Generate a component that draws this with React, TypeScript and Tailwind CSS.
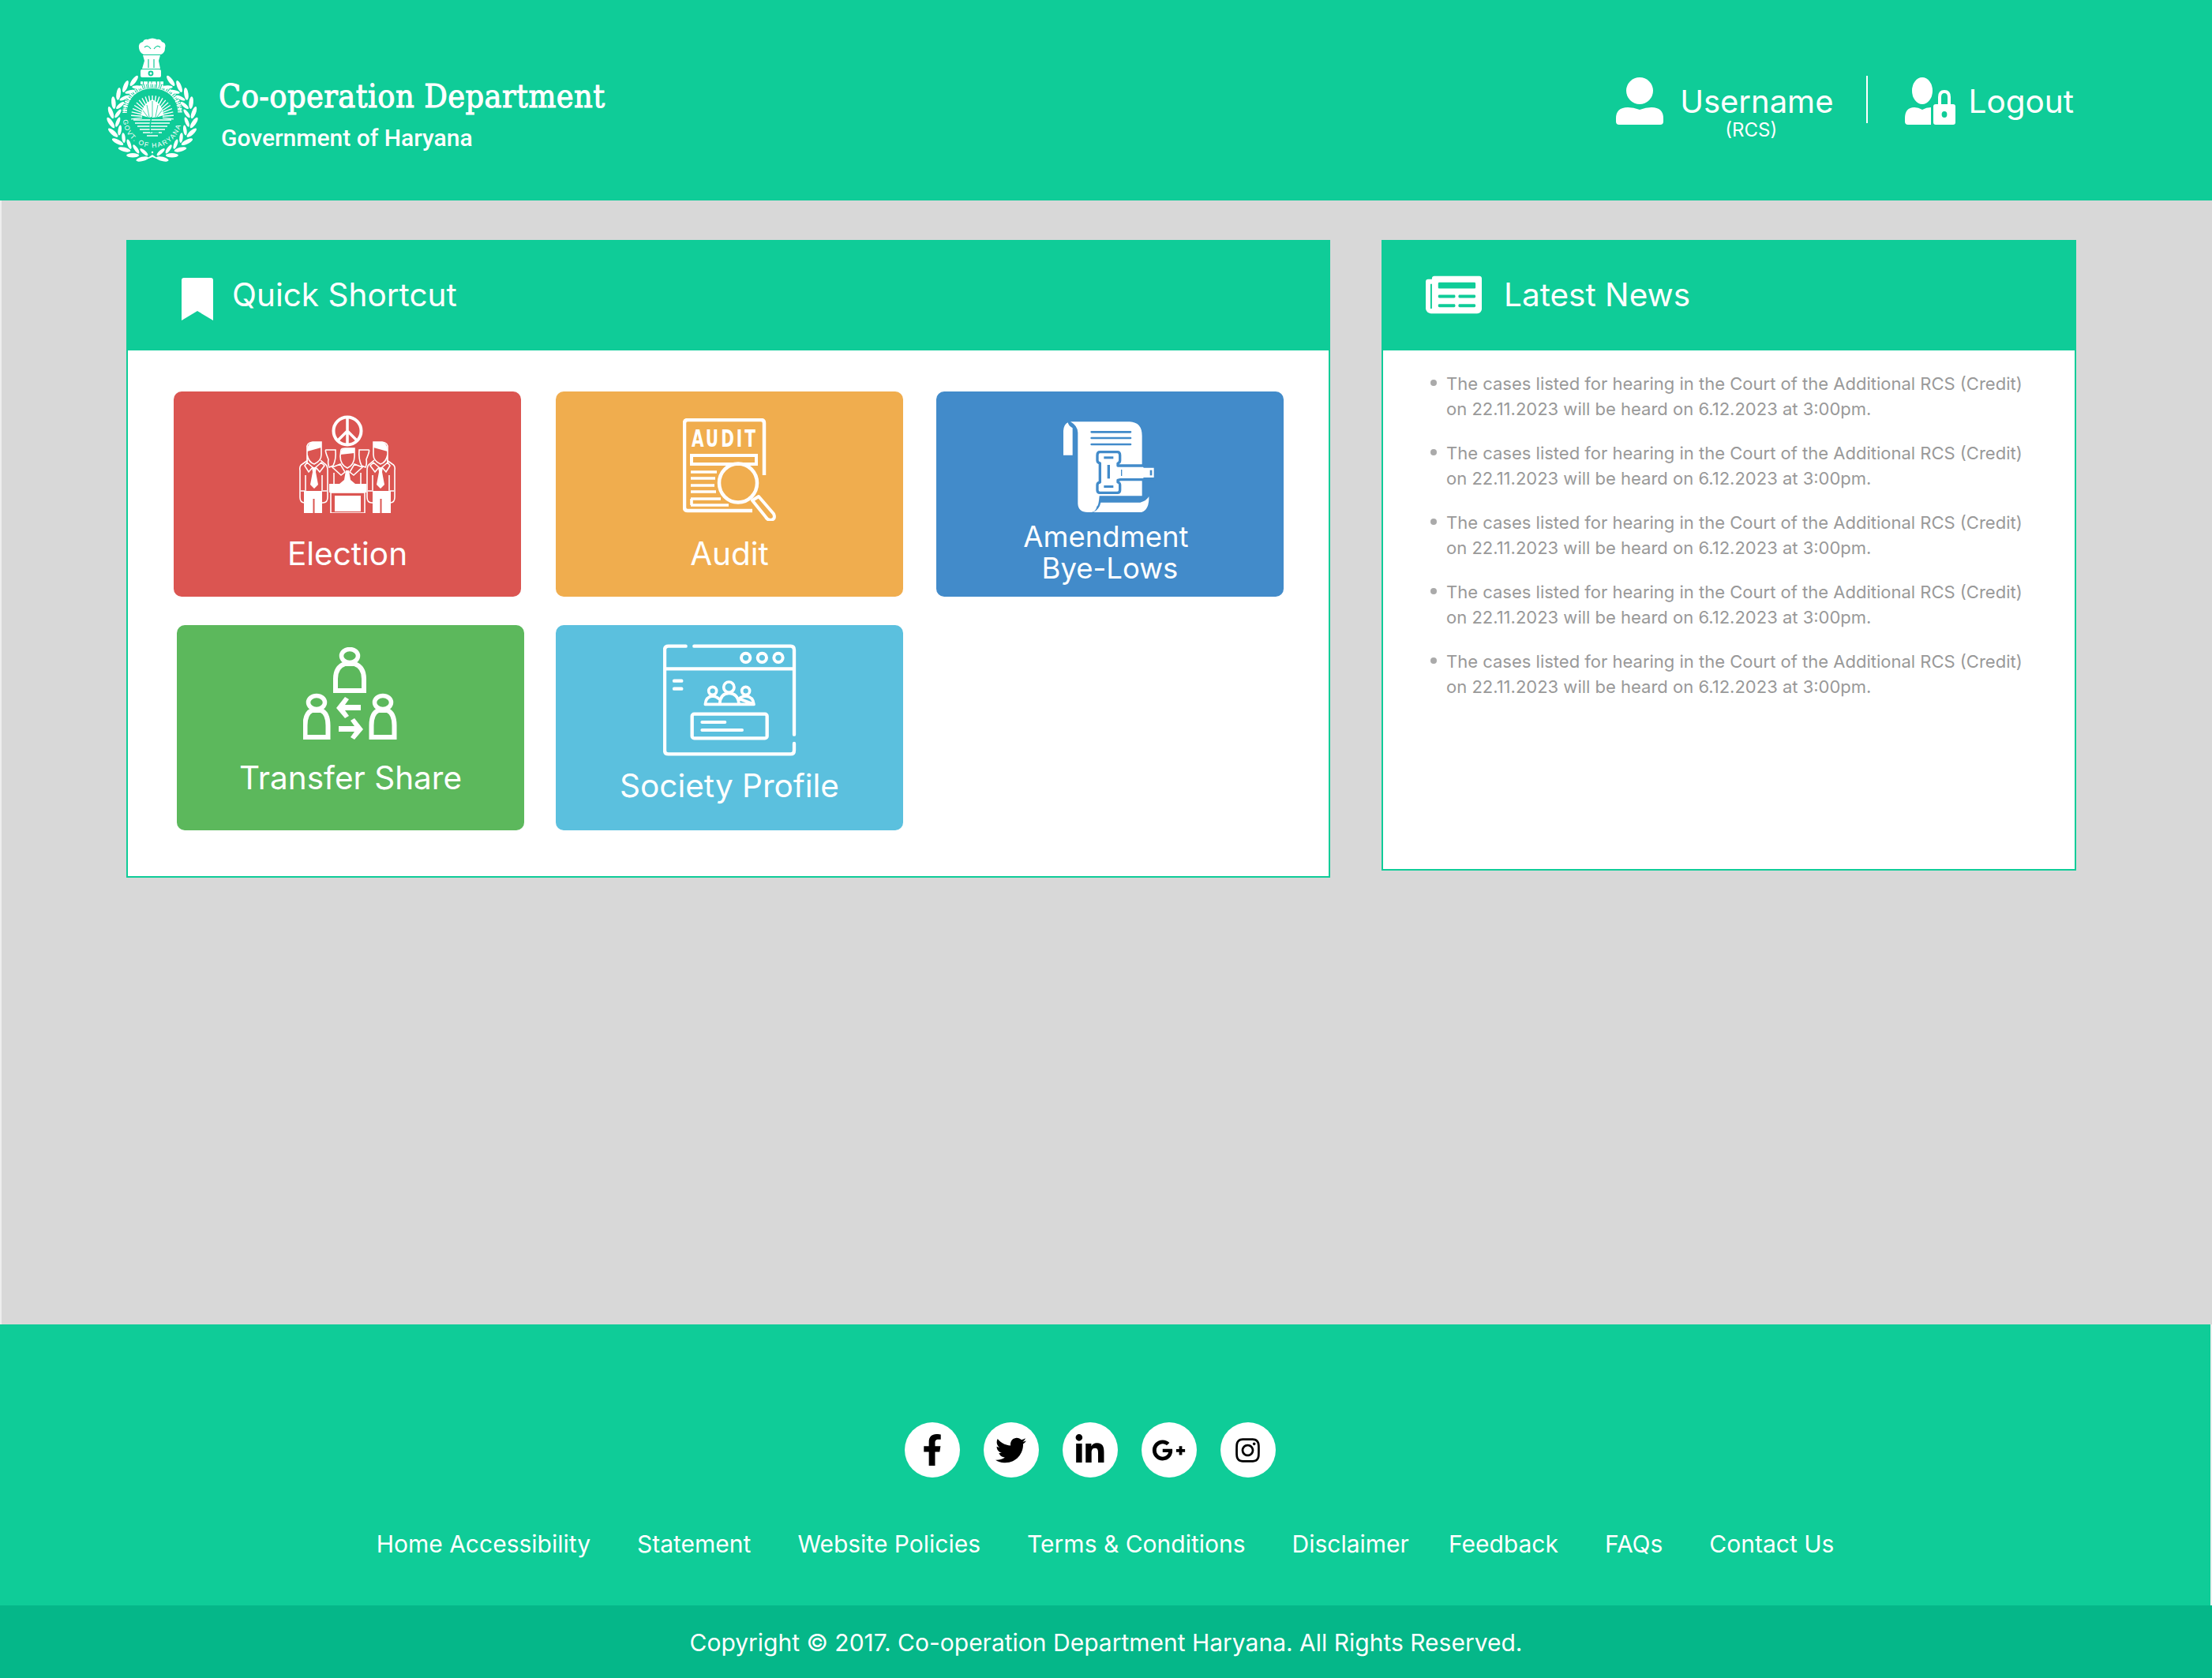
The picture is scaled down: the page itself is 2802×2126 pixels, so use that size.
import React from "react";
import { FaFacebookF, FaTwitter, FaLinkedinIn, FaGooglePlusG, FaInstagram, FaNewspaper } from "react-icons/fa";

const wreathAngles = [26, 40, 54, 68, 82, 96, 110, 124, 138, 152, 166];

function Wreath() {
  const cx = 60;
  const cy = 102;
  return (
    <g>
      {wreathAngles.map((deg) => {
        const a = (deg * Math.PI) / 180;
        const x1 = cx + 53 * Math.sin(a);
        const y1 = cy - 53 * Math.cos(a);
        const x2 = cx + 44 * Math.sin(a);
        const y2 = cy - 44 * Math.cos(a);
        const rot = deg - 90;
        return (
          <g key={deg}>
            <ellipse cx={x1} cy={y1} rx="2.7" ry="8" transform={`rotate(${rot + 28} ${x1} ${y1})`} />
            <ellipse cx={x2} cy={y2} rx="2.2" ry="6.5" transform={`rotate(${rot - 28} ${x2} ${y2})`} />
          </g>
        );
      })}
    </g>
  );
}

function Emblem() {
  const cx = 60;
  return (
    <svg width="119" height="155" viewBox="0 0 119 155" fill="white" className="shrink-0 overflow-visible">
      <path d="M43 13 Q42 6 48 5 Q50 1 54 2 Q60 -1 66 2 Q70 1 72 5 Q78 6 76 13 Q76 19 71 21 L49 21 Q44 19 43 13Z" />
      <path d="M48 22 H70 L68 29 L70 39 H47 L50 29Z" />
      <path d="M55 27 V38 M62 27 V38 M50 12 Q54 8 58 14 M70 12 Q66 8 62 14" stroke="#0fcc98" strokeWidth="1.2" fill="none" />
      <rect x="45" y="40" width="26" height="10" rx="2" />
      <circle cx="58" cy="45" r="3.4" fill="#0fcc98" />
      <circle cx="58" cy="45" r="1.5" />
      <path d="M45 57 H74" stroke="white" strokeWidth="3.5" strokeDasharray="3 1 5 1.500" fill="none" />
      <path d="M24 94 A36.500 36.500 0 0 1 96 94" fill="none" stroke="white" strokeWidth="0.9" />
      <path d="M25 95 A33.500 33.500 0 0 1 95 95" fill="none" stroke="white" strokeWidth="5.500" strokeDasharray="1.300 1 2 0.800 1 1.200 2.400 1" />
      <path id="govtArc" d="M23 102 A37 37 0 0 0 97 102" fill="none" />
      <text fontFamily="Liberation Sans, sans-serif" fontSize="8.5" fill="white" letterSpacing="1.5">
        <textPath href="#govtArc" startOffset="2">GOVT. OF HARYANA</textPath>
      </text>
      {Array.from({ length: 21 }, (_, i) => {
        const a = (Math.PI * 1.12 * (i + 0.5)) / 21 - Math.PI * 0.06;
        return (
          <line key={i} x1={cx - 13 * Math.cos(a)} y1={100 - 13 * Math.sin(a)} x2={cx - 27 * Math.cos(a)} y2={100 - 27 * Math.sin(a)} stroke="white" strokeWidth="1.400" />
        );
      })}
      <path d="M46 98 Q47 84 60 78 Q73 84 74 98 Q60 104 46 98Z" />
      <path d="M60 80 V100 M53 85 L56 100 M67 85 L64 100 M48 92 L54 100 M72 92 L66 100" stroke="#0fcc98" strokeWidth="0.8" />
      <path d="M36 104 H84 M38 108 H82 M41 112 H79 M44 116 H76 M48 120 H72 M53 124 H67" stroke="white" strokeWidth="1.700" />
      <path d="M59 100 Q56 112 58 120 M60 120 H68" stroke="#0fcc98" strokeWidth="1.500" fill="none" />
      <Wreath />
      <g transform="translate(120 0) scale(-1 1)"><Wreath /></g>
      <circle cx="60" cy="145" r="1.2" />
      <path d="M50 155 L60 148 L70 155 L60 151Z" />
    </svg>
  );
}

function UserIcon() {
  return (
    <svg width="60" height="60" viewBox="0 0 60 60" fill="white" className="shrink-0">
      <ellipse cx="30" cy="17" rx="17" ry="17" />
      <path d="M0 56 V52 Q0 38 15 38 Q22 38 30 41 Q38 38 45 38 Q60 38 60 52 V56 Q60 60 56 60 H4 Q0 60 0 56Z" />
    </svg>
  );
}

function UserLockIcon() {
  return (
    <svg width="64" height="60" viewBox="0 0 64 60" fill="white" className="shrink-0">
      <ellipse cx="22" cy="17" rx="13" ry="17" />
      <path d="M0 56 V52 Q0 38 12 38 Q17 38 22 41 Q27 38 33 38 L33 60 H4 Q0 60 0 56Z" />
      <path d="M36 37 Q36 34 39 34 H61 Q64 34 64 37 V57 Q64 60 61 60 H39 Q36 60 36 57Z" />
      <path d="M44 35 V25 Q44 18 50 18 Q56 18 56 25 V35" fill="none" stroke="white" strokeWidth="4" />
      <ellipse cx="50" cy="47" rx="3.4" ry="4" fill="#0fcc98" />
    </svg>
  );
}

function ElectionIcon() {
  const man = (
    <g>
      <path d="M10 62 V42 Q9 35 17 34 H28 V50 Q28 58 19 62 Q12 60 10 50Z" fill="none" stroke="white" strokeWidth="1.6" />
      <path d="M10 44 Q11 35 17 34 H28 V41 L10 46Z" />
      <path d="M11 57 L4 62 Q0 64 1 70 V104 Q1 111 7 111 H12 M27 57 L33 62 Q36 64 36 70 V104 Q36 111 30 111 H26" fill="none" stroke="white" strokeWidth="1.6" />
      <path d="M10 60 L17 66 L12 72 L7 64Z M28 60 L21 66 L26 72 L32 64Z" fill="none" stroke="white" strokeWidth="1.6" />
      <path d="M16 66 H22 L21 72 L24 88 L19 93 L14 88 L17 72Z" />
      <path d="M8 76 V95 M29 76 V95 M2 96 H9 M28 96 H35" fill="none" stroke="white" strokeWidth="1.6" />
      <path d="M6 96 H29 V124 H19.500 V106 H17.500 V124 H6Z" />
    </g>
  );
  return (
    <svg width="122" height="124" viewBox="0 0 122 124" fill="white" className="shrink-0">
      <circle cx="61" cy="20" r="17.500" fill="none" stroke="white" strokeWidth="4" />
      <path d="M61 3 V37 M61 20 L49 32 M61 20 L73 32" stroke="white" strokeWidth="3.5" fill="none" />
      {man}
      <g transform="translate(122 0) scale(-1 1)">{man}</g>
      <path d="M37 56 Q32 44 34 44 H46 Q47 56 43 64 L38 66 Q36 62 37 56Z M85 56 Q90 44 88 44 H76 Q75 56 79 64 L84 66 Q86 62 85 56Z" fill="none" stroke="white" strokeWidth="1.6" />
      <path d="M53 44 Q54 42 58 42 H70 V52 Q70 63 61 67 Q52 63 52 52Z" fill="none" stroke="white" strokeWidth="1.6" />
      <path d="M52 50 Q53 42 58 42 H70 V48Z" />
      <path d="M42 66 L52 62 L58 72 L53 76Z M80 66 L70 62 L64 72 L69 76Z" fill="none" stroke="white" strokeWidth="1.6" />
      <path d="M59 70 H63 L65 82 L71 87 H51 L57 82Z" />
      <path d="M44 73 V87 M78 73 V87" stroke="white" strokeWidth="1.6" />
      <rect x="38" y="87" width="47" height="11" />
      <rect x="40" y="98" width="43" height="26" fill="none" stroke="white" strokeWidth="1.600" />
      <rect x="45" y="102" width="33" height="20" />
    </svg>
  );
}

function AuditIcon() {
  return (
    <svg width="118" height="130" viewBox="0 0 118 130" fill="none" stroke="white" strokeWidth="4.5" className="shrink-0">
      <path d="M88 117 H6 Q2 117 2 113 V6 Q2 2 6 2 H99 Q103 2 103 6 V72" strokeLinejoin="round" />
      <text x="11" y="36" fill="white" stroke="none" fontFamily="DejaVu Sans Condensed, sans-serif" fontWeight="700" fontSize="30" letterSpacing="4" textLength="84" lengthAdjust="spacingAndGlyphs">AUDIT</text>
      <rect x="11" y="47" width="82" height="11" strokeWidth="4" />
      <path d="M10 68 H43 M10 76 H41 M10 85 H40 M10 93 H42 M10 102 H48 M10 110 H58 M11 102 V110" strokeWidth="3.600" />
      <ellipse cx="70" cy="82" rx="24" ry="24.500" strokeWidth="4.500" />
      <path d="M88 104 L96 99 L115 121 Q118 128 111 129 Q107 129 105 125Z" strokeWidth="4" strokeLinejoin="round" />
    </svg>
  );
}

function AmendmentIcon() {
  return (
    <svg width="140" height="135" viewBox="0 0 420 405" className="shrink-0">
      <path d="M33 62 Q35 38 50 31 Q53 44 68 52 L68 155 H33Z" fill="white" />
      <path d="M60 28 H285 Q332 30 332 82 V310 H170 Q167 350 160 350 Q158 368 140 372 H125 Q90 372 88 340 V70 Q88 44 60 28Z" fill="white" />
      <path d="M175 335 H325 Q350 328 358 312 Q360 362 330 372 H147 Q170 360 175 335Z" fill="white" />
      <path d="M140 67 H288 M140 90 H288 M140 114 H288" stroke="#428bca" strokeWidth="8" strokeLinecap="round" />
      <path d="M172 143 H238 Q248 143 248 155 V175 Q248 184 240 186 V195 H340 V198 H382 V245 H340 V248 H250 L240 250 V258 Q248 260 248 268 V288 Q248 298 238 298 H172 Q162 298 162 288 V268 Q162 260 172 258 V186 Q162 184 162 175 V155 Q162 143 172 143Z" fill="white" stroke="#428bca" strokeWidth="10" strokeLinejoin="round" />
      <rect x="187" y="160" width="36" height="9" fill="#428bca" />
      <rect x="187" y="270" width="36" height="9" fill="#428bca" />
      <rect x="200" y="192" width="10" height="52" fill="#428bca" />
      <rect x="252" y="210" width="4" height="24" fill="#428bca" />
      <rect x="362" y="212" width="8" height="20" fill="#428bca" />
    </svg>
  );
}

function TransferIcon() {
  const person = (x: number, y: number, w: number) => (
    <g>
      <ellipse cx={x} cy={y + 11} rx="10.500" ry="8.500" fill="none" stroke="white" strokeWidth="5.500" />
      <path d={`M${x - w / 2 + 3} ${y + 55} V${y + 40} Q${x - w / 2 + 3} ${y + 25} ${x - 6} ${y + 21} H${x + 6} Q${x + w / 2 - 3} ${y + 25} ${x + w / 2 - 3} ${y + 40} V${y + 55}Z`} fill="none" stroke="white" strokeWidth="6" />
    </g>
  );
  return (
    <svg width="120" height="118" viewBox="0 0 120 118" fill="white" className="shrink-0">
      {person(59, 0, 42)}
      {person(17, 59, 35)}
      {person(101, 59, 35)}
      <path d="M73 73 H53 L58 66 L53 63 L42 77 L53 90 L58 87 L53 80 H73Z" />
      <path d="M45 100 H65 L60 93 L65 90 L76 104 L65 117 L60 114 L65 107 H45Z" />
    </svg>
  );
}

function SocietyIcon() {
  return (
    <svg width="180" height="160" viewBox="0 0 540 480" fill="none" stroke="white" strokeWidth="13" strokeLinecap="round" strokeLinejoin="round" className="shrink-0">
      <path d="M86 26 H20 Q6 26 6 40 V422 Q6 436 20 436 H485 Q498 436 498 422 V396" />
      <path d="M118 26 H485 Q498 26 498 40 V362" />
      <path d="M8 112 H496" />
      <circle cx="314" cy="70" r="17" strokeWidth="12" />
      <circle cx="376" cy="70" r="17" strokeWidth="12" />
      <circle cx="438" cy="70" r="17" strokeWidth="12" />
      <path d="M42 158 H70 M42 188 H70" />
      <circle cx="188" cy="196" r="15" strokeWidth="11" />
      <circle cx="250" cy="182" r="20" strokeWidth="11" />
      <circle cx="314" cy="196" r="15" strokeWidth="11" />
      <path d="M160 247 Q162 218 188 216 Q200 216 212 226 M288 226 Q300 216 314 216 Q342 218 345 247 Z M160 247 H345 M215 245 Q218 205 250 205 Q284 205 288 245" strokeWidth="11" />
      <rect x="110" y="284" width="285" height="92" rx="8" />
      <path d="M148 315 H235 M148 345 H300" strokeWidth="12" />
    </svg>
  );
}

function Card({ color, className, icon, children }: { color: string; className: string; icon: React.ReactNode; children: React.ReactNode }) {
  return (
    <div className={`${color} ${className} h-[260px] rounded-[10px] flex flex-col items-center text-white text-center text-[40.5px] leading-[44px]`}>
      {icon}
      {children}
    </div>
  );
}

const newsItems = [0, 1, 2, 3, 4];
const links = [
  { t: "Home Accessibility", c: "" },
  { t: "Statement", c: "" },
  { t: "Website Policies", c: "" },
  { t: "Terms & Conditions", c: "" },
  { t: "Disclaimer", c: "mr-[-9px]" },
  { t: "Feedback", c: "" },
  { t: "FAQs", c: "" },
  { t: "Contact Us", c: "" },
];

export default function App() {
  return (
    <div className="w-[2802px] h-[2126px] flex flex-col bg-[#d8d8d8] font-['Inter',sans-serif] overflow-hidden">
      <header className="h-[254px] shrink-0 bg-[#0fcc98] flex justify-between pl-[133px] pr-[175px] text-white">
        <div className="flex items-start">
          <div className="mt-[48px]"><Emblem /></div>
          <div className="ml-[25px] mt-[102px]">
            <div className="font-['DejaVu_Serif_Condensed','DejaVu_Serif',serif] text-[41px] leading-[40px] tracking-[0.45px] [-webkit-text-stroke:1px_white]">Co-operation Department</div>
            <div className="font-['Roboto',sans-serif] font-medium text-[30px] leading-[32px] mt-[17px] ml-[3px]">Government of Haryana</div>
          </div>
        </div>
        <div className="flex items-start">
          <div className="mt-[98px] flex">
            <UserIcon />
            <div className="ml-[21px] mt-[7px] flex flex-col items-center">
              <div className="text-[40px] leading-[48px]">Username</div>
              <div className="text-[24px] leading-[28px] -mt-[2px] mr-[14px]">(RCS)</div>
            </div>
          </div>
          <div className="w-[2px] h-[60px] bg-white mt-[96px] ml-[42px] mr-[47px]"></div>
          <div className="mt-[98px] flex">
            <UserLockIcon />
            <div className="ml-[16px] mt-[7px] text-[40.5px] leading-[48px]">Logout</div>
          </div>
        </div>
      </header>

      <main className="flex-1 flex items-start pt-[50px] pl-[158px] border-l-2 border-[#eeeeee]">
        <section className="w-[1525px] h-[808px] border-2 border-t-0 border-[#0fcc98] bg-white">
          <div className="h-[140px] -mx-[2px] bg-[#0fcc98] flex items-center pl-[70px] text-white">
            <svg width="40" height="54" viewBox="0 0 40 54" fill="white" className="mt-[10px]">
              <path d="M3 0 H37 Q40 0 40 3 V54 L20 42 L0 54 V3 Q0 0 3 0Z" />
            </svg>
            <span className="ml-[24px] text-[40.5px] leading-[48px]">Quick Shortcut</span>
          </div>
          <div className="pt-[52px] pl-[58px]">
            <div className="flex">
              <Card color="bg-[#db5551]" className="w-[440px] pt-[30px]" icon={<ElectionIcon />}>
                <div className="mt-[30px]">Election</div>
              </Card>
              <Card color="bg-[#f0ad4e]" className="w-[440px] ml-[44px] pt-[34px]" icon={<AuditIcon />}>
                <div className="mt-[20px]">Audit</div>
              </Card>
              <Card color="bg-[#428bca]" className="w-[440px] ml-[42px] pt-[29px]" icon={<AmendmentIcon />}>
                <div className="mt-[0px] text-[36.5px] leading-[40px]">Amendment&nbsp;<br />Bye-Lows</div>
              </Card>
            </div>
            <div className="flex mt-[36px]">
              <Card color="bg-[#5cb85c]" className="w-[440px] ml-[4px] pt-[28px]" icon={<TransferIcon />}>
                <div className="mt-[26px]">Transfer Share</div>
              </Card>
              <Card color="bg-[#5bc0de]" className="w-[440px] ml-[40px] pt-[18px]" icon={<div className="ml-[12px]"><SocietyIcon /></div>}>
                <div className="mt-[4px]">Society Profile</div>
              </Card>
            </div>
          </div>
        </section>

        <section className="w-[880px] h-[799px] ml-[65px] border-2 border-t-0 border-[#0fcc98] bg-white">
          <div className="h-[140px] -mx-[2px] bg-[#0fcc98] flex items-center pl-[56px] text-white">
            <FaNewspaper className="w-[71px] h-[71px] mt-[-1px]" />
            <span className="ml-[28px] text-[40.5px] leading-[48px]">Latest News</span>
          </div>
          <ul className="pt-[26px] pl-[60px]">
            {newsItems.map((n) => (
              <li key={n} className="flex mb-[24px] text-[22px] leading-[32px] text-[#999999]">
                <span className="w-[8px] h-[8px] rounded-full bg-[#aaaaaa] mt-[11px] mr-[12px] shrink-0"></span>
                <span className="w-[745px]">The cases listed for hearing in the Court of the Additional RCS (Credit) on 22.11.2023 will be heard on 6.12.2023 at 3:00pm.</span>
              </li>
            ))}
          </ul>
        </section>
      </main>

      <footer className="h-[448px] shrink-0 bg-[#0fcc98] border-r-2 border-[#eeeeee] flex flex-col text-white">
        <div className="flex-1 flex flex-col items-center pt-[124px]">
          <div className="flex gap-[30px] mr-[39px]">
            <div className="w-[70px] h-[70px] rounded-full bg-white flex items-center justify-center text-black text-[40px]"><FaFacebookF /></div>
            <div className="w-[70px] h-[70px] rounded-full bg-white flex items-center justify-center text-black text-[39px]"><FaTwitter /></div>
            <div className="w-[70px] h-[70px] rounded-full bg-white flex items-center justify-center text-black text-[41px]"><FaLinkedinIn /></div>
            <div className="w-[70px] h-[70px] rounded-full bg-white flex items-center justify-center text-black text-[43px]"><FaGooglePlusG /></div>
            <div className="w-[70px] h-[70px] rounded-full bg-white flex items-center justify-center text-black text-[35px]"><FaInstagram /></div>
          </div>
          <div className="flex gap-[59px] mt-[64px] text-[30px] leading-[40px]">
            {links.map((l) => (
              <span key={l.t} className={l.c}>{l.t}</span>
            ))}
          </div>
        </div>
        <div className="h-[92px] bg-[#05b789] -mr-[2px] pt-[2px] flex items-center justify-center text-[30px]">
          Copyright © 2017. Co-operation Department Haryana. All Rights Reserved.
        </div>
      </footer>
    </div>
  );
}
